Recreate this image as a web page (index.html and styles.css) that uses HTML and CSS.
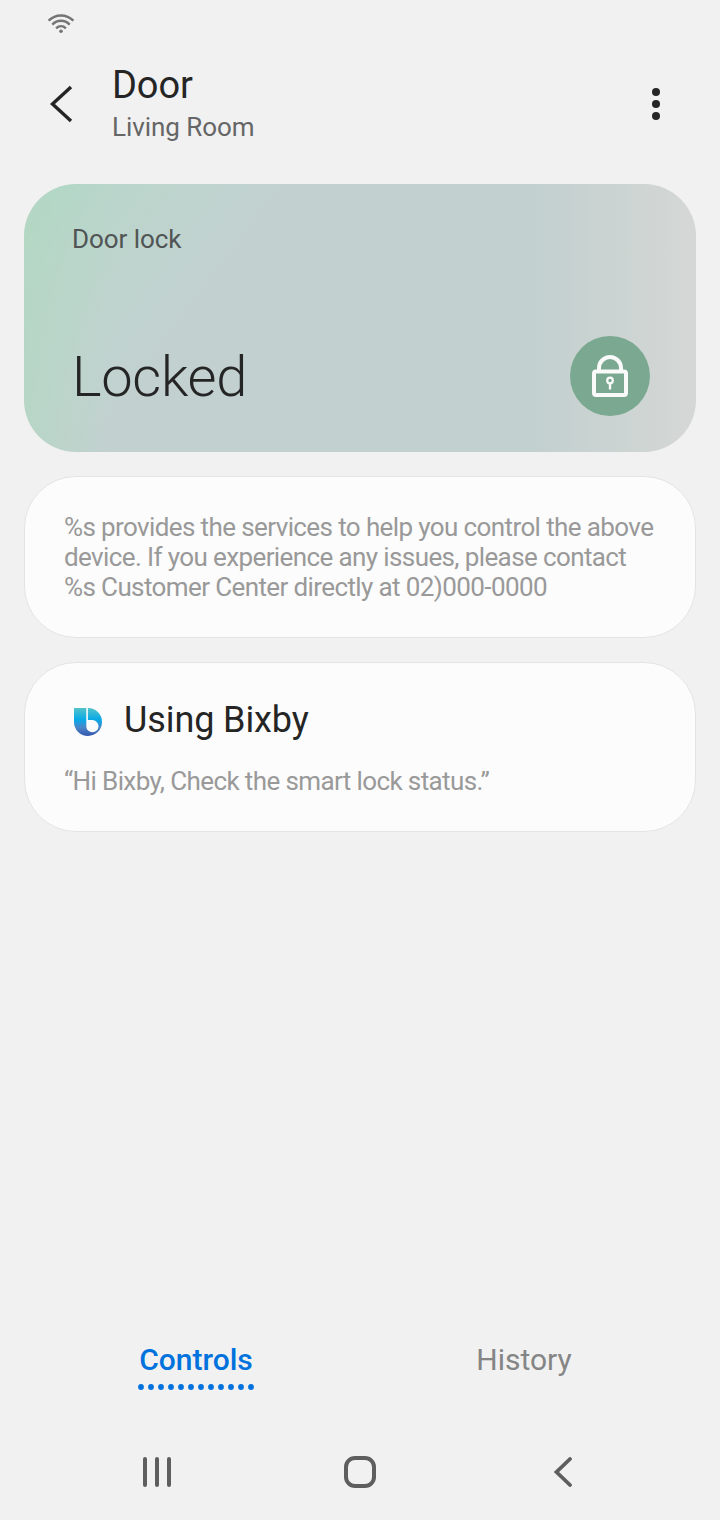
FILE: index.html
```html
<!DOCTYPE html>
<html lang="en">
<head>
<meta charset="utf-8">
<title>Door</title>
<link rel="stylesheet" href="styles.css">
</head>
<body>
<div class="screen">
  <div class="status">
    <svg class="wifi" width="28" height="22" viewBox="0 0 28 22" fill="none" stroke="#747474" stroke-width="2.5">
      <path d="M1.6 7.7C8.6 .7 19.4 .7 26.4 7.7"/>
      <path d="M5.3 11.6C10.3 6.6 17.7 6.6 22.7 11.6"/>
      <path d="M9.1 15.3C12 12.6 16 12.6 18.9 15.3"/>
      <circle cx="14" cy="18.3" r="1.8" fill="#747474" stroke="none"/>
    </svg>
  </div>
  <header class="header">
    <svg class="back" width="24" height="38" viewBox="0 0 24 38" fill="none" stroke="#252525" stroke-width="3.4"><path d="M22 2L3.500 19L22 36"/></svg>
    <div class="titles">
      <h1 class="title">Door</h1>
      <p class="room">Living Room</p>
    </div>
    <svg class="more" width="8" height="32" viewBox="0 0 8 32" fill="#252525"><circle cx="4" cy="4" r="4"/><circle cx="4" cy="16" r="4"/><circle cx="4" cy="28" r="4"/></svg>
  </header>
  <main class="cards">
    <section class="lock-card">
      <p class="lock-label">Door lock</p>
      <div class="lock-row">
        <p class="lock-state">Locked</p>
        <div class="lock-button">
          <svg width="36" height="42" viewBox="0 0 36 42" fill="none" stroke="#fafafa">
            <path stroke-width="4" d="M7 16V13A11 11 0 0 1 29 13V16"/>
            <rect stroke-width="4" x="2" y="16.500" width="32" height="23.500" rx="2"/>
            <circle stroke-width="2.2" cx="18" cy="25.5" r="2.8"/>
            <path stroke-width="2.4" d="M18 28V34.5"/>
          </svg>
        </div>
      </div>
    </section>
    <section class="card">
      <p class="text">%s provides the services to help you control the above<br>device. If you experience any issues, please contact<br>%s Customer Center directly at 02)000-0000</p>
    </section>
    <section class="card bixby">
      <div class="bixby-head">
        <svg width="28" height="28" viewBox="0 0 28 28">
          <defs><linearGradient id="bixby" x1="0" y1="0" x2="0" y2="28" gradientUnits="userSpaceOnUse"><stop offset="0" stop-color="#52c3ca"/><stop offset=".42" stop-color="#08a9e8"/><stop offset=".7" stop-color="#4a85c8"/><stop offset="1" stop-color="#3456ad"/></linearGradient></defs>
          <path fill="url(#bixby)" fill-rule="evenodd" d="M0 0H12.300V18.200A6.1 6.1 0 1 0 18.400 12.100H13.900V0A14 14 0 1 1 0 14Z"/>
        </svg>
        <h2 class="bixby-title">Using Bixby</h2>
      </div>
      <p class="text">“Hi Bixby, Check the smart lock status.”</p>
    </section>
  </main>
  <nav class="tabs">
    <div class="tab active">
      <span class="tab-name">Controls</span>
      <svg class="dots" width="118" height="6" viewBox="0 0 118 6"><path d="M4 3H115" fill="none" stroke="#0072de" stroke-width="5.8" stroke-linecap="round" stroke-dasharray="0.01 9.99"/></svg>
    </div>
    <div class="tab"><span class="tab-name">History</span></div>
  </nav>
  <footer class="navbar">
    <svg width="28" height="30" viewBox="0 0 28 30" stroke="#5e5e5e" stroke-width="4" stroke-linecap="round"><path d="M2 2V28M14 2V28M26 2V28"/></svg>
    <svg class="home" width="32" height="32" viewBox="0 0 32 32" fill="none" stroke="#5e5e5e" stroke-width="4"><rect x="2" y="2" width="28" height="28" rx="9"/></svg>
    <svg width="28" height="30" viewBox="0 0 28 30" fill="none" stroke="#5e5e5e" stroke-width="3.800" stroke-linecap="round"><path d="M25 2L11.500 15L25 28"/></svg>
  </footer>
</div>
</body>
</html>
```

FILE: styles.css
```css
* { box-sizing: border-box; }
body { margin: 0; background: #f1f1f1; font-family: Roboto, sans-serif; color: #252525; }
h1, h2, p { margin: 0; font-weight: 400; }
svg { display: block; flex: none; }
.screen { height: 1520px; display: flex; flex-direction: column; }
.status { height: 48px; padding: 13px 47px; }
.header { height: 136px; display: flex; align-items: flex-start; padding: 15px 60px 0 49px; }
.back { margin-top: 22px; }
.titles { flex: 1; margin-left: 39px; }
.title { font-size: 38px; line-height: 44px; letter-spacing: -0.1px; }
.room { margin-top: 5px; font-size: 26px; line-height: 30px; letter-spacing: -0.05px; color: #666; }
.more { margin-top: 25px; }
.cards { flex: 1; display: flex; flex-direction: column; gap: 24px; padding: 0 24px; }
.lock-card {
  height: 268px;
  padding: 40px 46px 36px 48px;
  border-radius: 52px;
  display: flex;
  flex-direction: column;
  justify-content: space-between;
  background:
    linear-gradient(90deg, rgba(212, 215, 213, 0) 76%, #d4d7d5 99%),
    linear-gradient(90deg, rgba(181, 215, 195, 0.75) 0%, rgba(181, 215, 195, 0.35) 6%, rgba(181, 215, 195, 0) 13%),
    linear-gradient(127deg, #b2d8c8 4%, #bad5cb 11%, #c0d3cf 23%, #c2d0cf 33%);
}
.lock-label { font-size: 26px; line-height: 30px; letter-spacing: -0.05px; color: #505454; }
.lock-row { display: flex; align-items: center; justify-content: space-between; }
.lock-state { font-size: 56px; line-height: 66px; font-weight: 300; letter-spacing: -0.3px; padding-top: 2px; }
.lock-button { width: 80px; height: 80px; border-radius: 50%; background: #7aa890; display: flex; align-items: center; justify-content: center; }
.card { height: 162px; padding: 35px 39px 0; border: 1px solid #e4e4e4; border-radius: 52px; background: #fcfcfc; }
.bixby { height: 170px; }
.text { font-size: 26px; line-height: 30px; color: #999; letter-spacing: -0.61px; white-space: nowrap; }
.bixby-head { display: flex; align-items: center; gap: 22px; padding-left: 10px; margin-bottom: 25px; }
.bixby-head svg { margin-top: 4px; }
.bixby-title { font-size: 36px; line-height: 42px; letter-spacing: -0.1px; margin-top: 1px; }
.tabs { height: 82px; display: grid; grid-template-columns: 328px 328px; padding: 0 32px; margin-bottom: 32px; }
.tab { display: flex; flex-direction: column; align-items: center; padding-top: 16px; color: #858585; font-size: 30px; line-height: 36px; }
.active { color: #0072de; font-weight: 500; }
.dots { margin-top: 6px; }
.navbar { height: 64px; display: flex; justify-content: space-between; align-items: center; padding: 0 147px 0 143px; margin-bottom: 16px; }
.home { margin-left: 4px; }
```
